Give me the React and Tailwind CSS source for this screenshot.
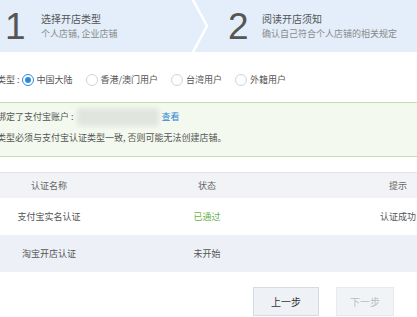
import React from "react";

export default function App() {
  const radios = [
    { label: "中国大陆", checked: true },
    { label: "香港/澳门用户" },
    { label: "台湾用户" },
    { label: "外籍用户" },
  ];
  return (
    <div className="w-[417px] h-[317px] overflow-hidden bg-white font-['Noto_Sans_CJK_SC',sans-serif] text-[#333]">
      {/* Steps header */}
      <div className="flex h-[52px] bg-[#e3eefa]">
        <div className="flex items-center w-[186px] pl-[5px]">
          <span className="w-[36px] text-[37px] leading-none text-[#555] font-['Liberation_Sans',sans-serif]">1</span>
          <div className="flex flex-col">
            <span className="text-[10px] leading-[15px] text-[#555]">选择开店类型</span>
            <span className="text-[9px] leading-[15px] text-[#8a8a8a]">个人店铺, 企业店铺</span>
          </div>
        </div>
        <svg width="26" height="52" viewBox="0 0 26 52" className="shrink-0">
          <polyline points="6,-2 21,26 6,54" fill="none" stroke="#ffffff" strokeWidth="2.5" />
        </svg>
        <div className="flex items-center pl-[16px]">
          <span className="w-[34px] text-[37px] leading-none text-[#555] font-['Liberation_Sans',sans-serif]">2</span>
          <div className="flex flex-col">
            <span className="text-[10px] leading-[15px] text-[#555]">阅读开店须知</span>
            <span className="text-[9px] leading-[15px] text-[#8a8a8a]">确认自己符合个人店铺的相关规定</span>
          </div>
        </div>
      </div>

      {/* Radio row */}
      <div className="mt-[18px] h-[20px] flex items-center text-[9px] text-[#555]">
        <span className="-ml-[3px] mr-[2px]">类型 :</span>
        {radios.map((r, i) => (
          <label key={i} className="flex items-center mr-[13px]">
            <span
              className={
                "w-[12px] h-[12px] rounded-full border flex items-center justify-center mr-[3px] bg-white " +
                (r.checked ? "border-[#2b8ae0]" : "border-[#cfd4da]")
              }
            >
              {r.checked && <span className="w-[6px] h-[6px] rounded-full bg-[#2b8ae0]" />}
            </span>
            <span>{r.label}</span>
          </label>
        ))}
      </div>

      {/* Green notice */}
      <div className="mt-[12px] border-y border-[#c7dcac] bg-[#f3f9ee] pt-[4px] pb-[8px] text-[9px] text-[#555]">
        <div className="flex items-center h-[20px] -ml-[3px]">
          <span>绑定了支付宝账户 :</span>
          <span className="ml-[3px] w-[82px] h-[18px] rounded-[4px] bg-[#e1e5e0] blur-[2px]" />
          <span className="ml-[3px] text-[#2f86d6]">查看</span>
        </div>
        <div className="flex items-center h-[20px] mt-[1px] -ml-[3px]">
          <span>类型必须与支付宝认证类型一致, 否则可能无法创建店铺。</span>
        </div>
      </div>

      {/* Table */}
      <div className="mt-[15px] w-[480px] text-[9px]">
        <div className="flex h-[26px] items-center border-t border-[#e1e4e8] bg-[#f2f3f6] text-[#666]">
          <div className="w-[98px] text-center">认证名称</div>
          <div className="w-[218px] text-center">状态</div>
          <div className="w-[164px] text-center">提示</div>
        </div>
        <div className="flex h-[37px] items-center bg-white text-[#555]">
          <div className="w-[98px] text-center">支付宝实名认证</div>
          <div className="w-[218px] text-center text-[#6bb250]">已通过</div>
          <div className="w-[164px] text-center">认证成功</div>
        </div>
        <div className="flex h-[37px] items-center bg-[#edf1f7] text-[#555]">
          <div className="w-[98px] text-center">淘宝开店认证</div>
          <div className="w-[218px] text-center">未开始</div>
          <div className="w-[164px] text-center"></div>
        </div>
      </div>

      {/* Buttons */}
      <div className="mt-[15px] flex pl-[253px] gap-[17px] text-[10px]">
        <button className="w-[66px] h-[29px] border border-[#d6dbe1] bg-[#eef1f5] text-[#333]">上一步</button>
        <button className="w-[58px] h-[29px] border border-[#e6e9ed] bg-[#f1f4f7] text-[#bbb]">下一步</button>
      </div>
    </div>
  );
}
